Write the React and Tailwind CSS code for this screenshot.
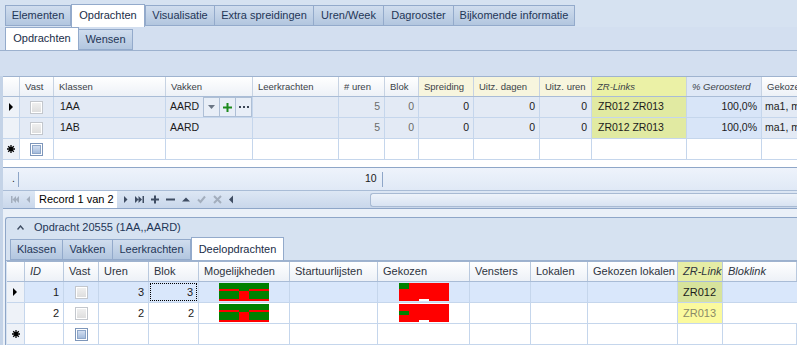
import React from 'react';

const Pointer = () => (
  <svg width="5" height="8" viewBox="0 0 5 8"><path d="M0 0L4 4L0 8Z" fill="#000" /></svg>
);

const Star = () => (
  <svg width="8" height="8" viewBox="0 0 8 8" stroke="#000" strokeWidth="1.3">
    <path d="M4 0V8M0 4H8M1.2 1.2L6.8 6.8M6.8 1.2L1.2 6.8" />
  </svg>
);

const Check = ({ blue }) =>
  blue ? (
    <div className="w-[13px] h-[13px] border border-[#7d96ba] bg-white p-px">
      <div className="w-full h-full bg-linear-to-b from-[#d2def0] to-[#a5bcdc] border border-[#8ea6c8]" />
    </div>
  ) : (
    <div className="w-[13px] h-[13px] border border-[#c3c7cd] bg-white p-px">
      <div className="w-full h-full bg-linear-to-b from-[#efefef] to-[#dedede]" />
    </div>
  );

const Tab = ({ label, active, w }) => (
  <div
    className={`${w} flex items-center justify-center text-[11px] border border-[#93aacb] ${
      active
        ? 'h-[23px] bg-white border-b-0 text-[#1a2d48] z-10'
        : 'h-[21px] bg-linear-to-b from-[#d0ddee] to-[#b2c6df] text-[#1f3657] -ml-px first:ml-0'
    }`}
  >
    {label}
  </div>
);

// top grid columns
const topCols = [
  { w: 'w-[17px]', label: '' },
  { w: 'w-[34px]', label: 'Vast' },
  { w: 'w-[112px]', label: 'Klassen' },
  { w: 'w-[87px]', label: 'Vakken' },
  { w: 'w-[86px]', label: 'Leerkrachten' },
  { w: 'w-[46px]', label: '# uren' },
  { w: 'w-[34px]', label: 'Blok' },
  { w: 'w-[55px]', label: 'Spreiding', bg: 'bg-[#f7f5de]' },
  { w: 'w-[66px]', label: 'Uitz. dagen', bg: 'bg-[#f7f5de]' },
  { w: 'w-[52px]', label: 'Uitz. uren', bg: 'bg-[#f7f5de]' },
  { w: 'w-[95px]', label: 'ZR-Links', bg: 'bg-[#ebf1a6]', italic: true },
  { w: 'w-[75px]', label: '% Geroosterd', bg: 'bg-[#dfe8f6]', italic: true },
  { w: 'flex-1', label: 'Gekozen' },
];

const VakkenCell = () => (
  <div className="flex items-stretch h-full w-full">
    <span className="pl-[4px] w-[37px] flex items-center">AARD</span>
    <div className="flex w-[49px] border border-[#aebfd6] bg-[#e8eef7]">
      <div className="w-[16px] flex items-center justify-center border-r border-[#aebfd6]">
        <svg width="7" height="4" viewBox="0 0 7 4"><path d="M0 0H7L3.5 4Z" fill="#6b7685" /></svg>
      </div>
      <div className="w-[16px] flex items-center justify-center border-r border-[#aebfd6]">
        <svg width="9" height="9" viewBox="0 0 9 9"><path d="M3.5 0H5.5V3.5H9V5.5H5.5V9H3.5V5.5H0V3.5H3.5Z" fill="#1d8a1d" /></svg>
      </div>
      <div className="flex-1 flex items-center justify-center">
        <svg width="10" height="2" viewBox="0 0 10 2" fill="#3b4656"><rect x="0" y="0" width="2" height="2" /><rect x="4" y="0" width="2" height="2" /><rect x="8" y="0" width="2" height="2" /></svg>
      </div>
    </div>
  </div>
);

const topRows = [
  { ind: <Pointer />, klas: '1AA', vak: <VakkenCell /> },
  { ind: null, klas: '1AB', vak: <span className="pl-[4px]">AARD</span> },
];

function TopGrid() {
  return (
    <div className="flex-1 bg-white border-t border-[#9fb3cf] flex flex-col">
      <div className="flex h-[20px] border-b border-[#a9bcd6] bg-linear-to-b from-[#ffffff] to-[#edf1f7] text-[9.5px] text-[#3a3f47]">
        {topCols.map((c, i) => (
          <div
            key={i}
            className={`${c.w} ${c.bg || ''} ${c.italic ? 'italic' : ''} border-r border-[#c7d3e3] flex items-center pl-[5px] whitespace-nowrap overflow-hidden`}
          >
            {c.label}
          </div>
        ))}
      </div>
      {topRows.map((r, i) => (
        <div key={i} className="flex h-[21px] border-b border-[#c5d6ec] bg-[#e3eaf5] text-[10.5px] text-[#1b1b1b]">
          <div className="w-[17px] bg-[#eef2f8] border-r border-[#c5d6ec] flex items-center justify-center">{r.ind}</div>
          <div className="w-[34px] border-r border-[#c5d6ec] flex items-center justify-center"><Check /></div>
          <div className="w-[112px] border-r border-[#c5d6ec] flex items-center pl-[6px]">{r.klas}</div>
          <div className="w-[87px] border-r border-[#c5d6ec] flex items-center">{r.vak}</div>
          <div className="w-[86px] border-r border-[#c5d6ec]" />
          <div className="w-[46px] border-r border-[#c5d6ec] flex items-center justify-end pr-[4px] text-[#6a6a6a]">5</div>
          <div className="w-[34px] border-r border-[#c5d6ec] flex items-center justify-end pr-[4px] text-[#6a6a6a]">0</div>
          <div className="w-[55px] border-r border-[#c5d6ec] flex items-center justify-end pr-[4px]">0</div>
          <div className="w-[66px] border-r border-[#c5d6ec] flex items-center justify-end pr-[4px]">0</div>
          <div className="w-[52px] border-r border-[#c5d6ec] flex items-center justify-end pr-[4px]">0</div>
          <div className="w-[95px] border-r border-[#c5d6ec] bg-[#e1eaa2] flex items-center pl-[6px]">ZR012 ZR013</div>
          <div className="w-[75px] border-r border-[#c5d6ec] bg-[#d8e5f8] flex items-center justify-end pr-[4px]">100,0%</div>
          <div className="flex-1 flex items-center pl-[3px] whitespace-nowrap overflow-hidden">ma1, m</div>
        </div>
      ))}
      <div className="flex h-[21px] border-b border-[#c5d6ec] bg-white">
        <div className="w-[17px] bg-[#eef2f8] border-r border-[#c5d6ec] flex items-center justify-center"><Star /></div>
        <div className="w-[34px] border-r border-[#c5d6ec] flex items-center justify-center"><Check blue /></div>
        {topCols.slice(2).map((c, i) => (
          <div key={i} className={`${c.w} border-r border-[#c5d6ec]`} />
        ))}
      </div>
    </div>
  );
}

const NavIcon = ({ d, color, w = 10 }) => (
  <svg width={w} height="9" viewBox={`0 0 ${w} 9`}><path d={d} fill={color} /></svg>
);

function Navigator() {
  const dark = '#3f4d63';
  const light = '#a3aebd';
  return (
    <div className="h-[18px] flex items-center border-b border-[#8ea6c8] bg-linear-to-b from-[#dde7f4] to-[#c9d7eb]">
      <div className="w-[30px] flex items-center justify-around pl-[4px]">
        <NavIcon w={8} color={light} d="M0 1H1.5V8H0ZM1.5 4.5L5 1V8ZM4.5 4.5L8 1V8Z" />
        <NavIcon w={4} color={light} d="M4 1V8L0.5 4.5Z" />
      </div>
      <div className="w-[82px] h-[17px] bg-white flex items-center pl-[4px] text-[11px] text-black ml-[2px]">Record 1 van 2</div>
      <div className="flex items-center gap-[7px] pl-[7px]">
        <NavIcon w={4} color={dark} d="M0 1V8L3.5 4.5Z" />
        <NavIcon w={9} color={dark} d="M0 1L3.5 4.5L0 8ZM3.5 1L7 4.5L3.5 8ZM7.5 1H9V8H7.5Z" />
        <NavIcon w={8} color={dark} d="M3 0.5H5V3.5H8V5.5H5V8.5H3V5.5H0V3.5H3Z" />
        <NavIcon w={9} color={dark} d="M0 3.5H9V5.5H0Z" />
        <NavIcon w={8} color={dark} d="M0 6.5L4 2.5L8 6.5Z" />
        <svg width="9" height="9" viewBox="0 0 9 9"><path d="M1 4.5L3.5 7L8 1.5" stroke={light} strokeWidth="2" fill="none" /></svg>
        <svg width="9" height="9" viewBox="0 0 9 9"><path d="M1 1L8 8M8 1L1 8" stroke={light} strokeWidth="2" /></svg>
        <NavIcon w={4} color={dark} d="M4 0.5V8.5L0 4.5Z" />
      </div>
      <div className="flex-1 h-full pl-[137px] flex items-center">
        <div className="w-full h-[14px] rounded-l-[3px] border border-r-0 border-[#a8bad3] bg-linear-to-b from-[#eef3fa] to-[#d8e3f2]" />
      </div>
    </div>
  );
}

// bottom grid
const botCols = [
  { w: 'w-[18px]', label: '' },
  { w: 'w-[39px]', label: 'ID', italic: true },
  { w: 'w-[35px]', label: 'Vast' },
  { w: 'w-[50px]', label: 'Uren' },
  { w: 'w-[50px]', label: 'Blok' },
  { w: 'w-[91px]', label: 'Mogelijkheden' },
  { w: 'w-[88px]', label: 'Startuurlijsten' },
  { w: 'w-[92px]', label: 'Gekozen' },
  { w: 'w-[61px]', label: 'Vensters' },
  { w: 'w-[57px]', label: 'Lokalen' },
  { w: 'w-[90px]', label: 'Gekozen lokalen' },
  { w: 'w-[45px]', label: 'ZR-Link', italic: true, bg: 'bg-[#e6eda5]' },
  { w: 'flex-1', label: 'Bloklink', italic: true },
];

const Mogelijk = () => (
  <svg width="50" height="18" viewBox="0 0 50 18">
    <rect width="50" height="18" fill="#008000" />
    <rect x="0" y="6" width="20" height="2" fill="#ff0000" />
    <rect x="30" y="6" width="20" height="2" fill="#ff0000" />
    <rect x="20" y="8" width="10" height="10" fill="#ff0000" />
    <rect x="0" y="16" width="20" height="2" fill="#ff0000" />
    <rect x="30" y="16" width="20" height="2" fill="#ff0000" />
  </svg>
);

const Gekozen = ({ gy }) => (
  <svg width="50" height="18" viewBox="0 0 50 18">
    <rect width="50" height="18" fill="#ff0000" />
    <rect x="0" y={gy} width="10" height={gy === 0 ? 6 : 4} fill="#008000" />
    <rect x="20" y="16" width="10" height="2" fill="#ffffff" />
  </svg>
);

function BottomGrid() {
  const rows = [
    { ind: <Pointer />, id: '1', uren: '3', blok: '3', gy: 0, zr: 'ZR012', bg: 'bg-[#d9e7fb]', zbg: 'bg-[#d7e39c]', zc: 'text-[#1b1b1b]', focus: true },
    { ind: null, id: '2', uren: '2', blok: '2', gy: 7, zr: 'ZR013', bg: 'bg-white', zbg: 'bg-[#fbfa9e]', zc: 'text-[#8a8a68]' },
  ];
  const line = 'border-r border-[#c5d6ec]';
  return (
    <div className="flex-1 bg-white border-t border-[#9fb3cf] flex flex-col text-[11px]">
      <div className="flex h-[20px] border-b border-[#a9bcd6] bg-linear-to-b from-[#ffffff] to-[#edf1f7] text-[#2e3440]">
        {botCols.map((c, i) => (
          <div
            key={i}
            className={`${c.w} ${c.bg || ''} ${c.italic ? 'italic' : ''} border-r border-[#b9c9de] flex items-center pl-[5px] whitespace-nowrap overflow-hidden`}
          >
            {c.label}
          </div>
        ))}
      </div>
      {rows.map((r, i) => (
        <div key={i} className={`flex h-[21px] border-b border-[#c5d6ec] ${r.bg} text-[#1b1b1b]`}>
          <div className={`w-[18px] bg-[#eef2f8] ${line} flex items-center justify-center`}>{r.ind}</div>
          <div className={`w-[39px] ${line} flex items-center justify-end pr-[4px]`}>{r.id}</div>
          <div className={`w-[35px] ${line} flex items-center justify-center`}><Check /></div>
          <div className={`w-[50px] ${line} flex items-center justify-end pr-[4px]`}>{r.uren}</div>
          <div className={`w-[50px] ${line} flex items-center p-px`}>
            <div className={`w-full h-full flex items-center justify-end pr-[3px] ${r.focus ? 'border border-dotted border-black' : ''}`}>{r.blok}</div>
          </div>
          <div className={`w-[91px] ${line} flex items-center justify-center`}><Mogelijk /></div>
          <div className={`w-[88px] ${line}`} />
          <div className={`w-[92px] ${line} flex items-center justify-center`}><Gekozen gy={r.gy} /></div>
          <div className={`w-[61px] ${line}`} />
          <div className={`w-[57px] ${line}`} />
          <div className={`w-[90px] ${line}`} />
          <div className={`w-[45px] ${line} ${r.zbg} ${r.zc} flex items-center pl-[5px]`}>{r.zr}</div>
          <div className="flex-1" />
        </div>
      ))}
      <div className="flex h-[21px] border-b border-[#c5d6ec] bg-white">
        <div className={`w-[18px] bg-[#eef2f8] ${line} flex items-center justify-center`}><Star /></div>
        <div className={`w-[39px] ${line}`} />
        <div className={`w-[35px] ${line} flex items-center justify-center`}><Check blue /></div>
        {botCols.slice(3).map((c, i) => (
          <div key={i} className={`${c.w} ${line}`} />
        ))}
      </div>
    </div>
  );
}

export default function App() {
  return (
    <div className="w-[797px] h-[345px] overflow-hidden flex flex-col bg-[#d6e2f1] font-['Liberation_Sans',Arial,sans-serif] select-none">
      {/* main tabs */}
      <div className="h-[27px] flex items-end pl-[5px]">
        <div className="flex items-end pb-px">
          <Tab w="w-[66px]" label="Elementen" />
        </div>
        <Tab w="w-[74px]" label="Opdrachten" active />
        <div className="flex items-end pb-px">
          <Tab w="w-[70px]" label="Visualisatie" />
          <Tab w="w-[100px]" label="Extra spreidingen" />
          <Tab w="w-[71px]" label="Uren/Week" />
          <Tab w="w-[71px]" label="Dagrooster" />
          <Tab w="w-[122px]" label="Bijkomende informatie" />
        </div>
      </div>

      {/* sub tabs */}
      <div className="h-[24px] flex items-end pl-[5px] bg-[#d3dff0] border-b border-[#9cb1ce]">
        <Tab w="w-[74px]" label="Opdrachten" active />
        <Tab w="w-[55px]" label="Wensen" />
      </div>

      {/* toolbar area */}
      <div className="h-[26px] bg-[#d3dff0]" />

      {/* upper grid area */}
      <div className="flex pl-[3px] bg-[#c4d3e7]">
        <div className="flex-1 flex flex-col">
          <div className="h-[91px] flex flex-col bg-white">
            <TopGrid />
          </div>
          <div className="h-[24px] border-t border-[#8ea6c8] border-b border-b-[#a9bcd6] bg-linear-to-b from-[#eef3fb] to-[#e0e9f6] flex items-center text-[10.5px] text-[#1b1b1b]">
            <span className="w-[15px] pl-[9px]">.</span>
            <span className="w-px h-[15px] bg-[#8ea6c8]" />
            <span className="ml-[346px]">10</span>
            <span className="w-px h-[15px] bg-[#8ea6c8] ml-[5px]" />
          </div>
          <Navigator />
        </div>
      </div>

      <div className="h-[8px] flex pl-[3px] bg-[#c4d3e7]">
        <div className="flex-1 bg-[#eaf0f8]" />
      </div>

      {/* detail panel */}
      <div className="flex-1 flex bg-[#c4d3e7] pl-[3px]">
        <div className="flex-1 flex bg-[#eaf0f8] pl-[2px]">
          <div className="flex-1 flex flex-col border-l border-t border-[#8ea6c8] rounded-tl-[3px] bg-[#d6e2f1]">
            <div className="h-[19px] flex items-center text-[11px] text-[#1f3657]">
              <svg className="ml-[11px] mr-[10px]" width="7" height="5" viewBox="0 0 7 5"><path d="M0.5 4.5L3.5 1L6.5 4.5" stroke="#3f4d63" strokeWidth="1.4" fill="none" /></svg>
              Opdracht 20555 (1AA,,AARD)
            </div>
            <div className="h-[24px] flex items-end pl-[4px] border-b border-[#9cb1ce]">
              <div className="flex items-end">
                <Tab w="w-[53px]" label="Klassen" />
                <Tab w="w-[51px]" label="Vakken" />
                <Tab w="w-[79px]" label="Leerkrachten" />
              </div>
              <Tab w="w-[93px]" label="Deelopdrachten" active />
            </div>
            <div className="flex-1 flex pl-px">
              <BottomGrid />
            </div>
          </div>
        </div>
      </div>
    </div>
  );
}
